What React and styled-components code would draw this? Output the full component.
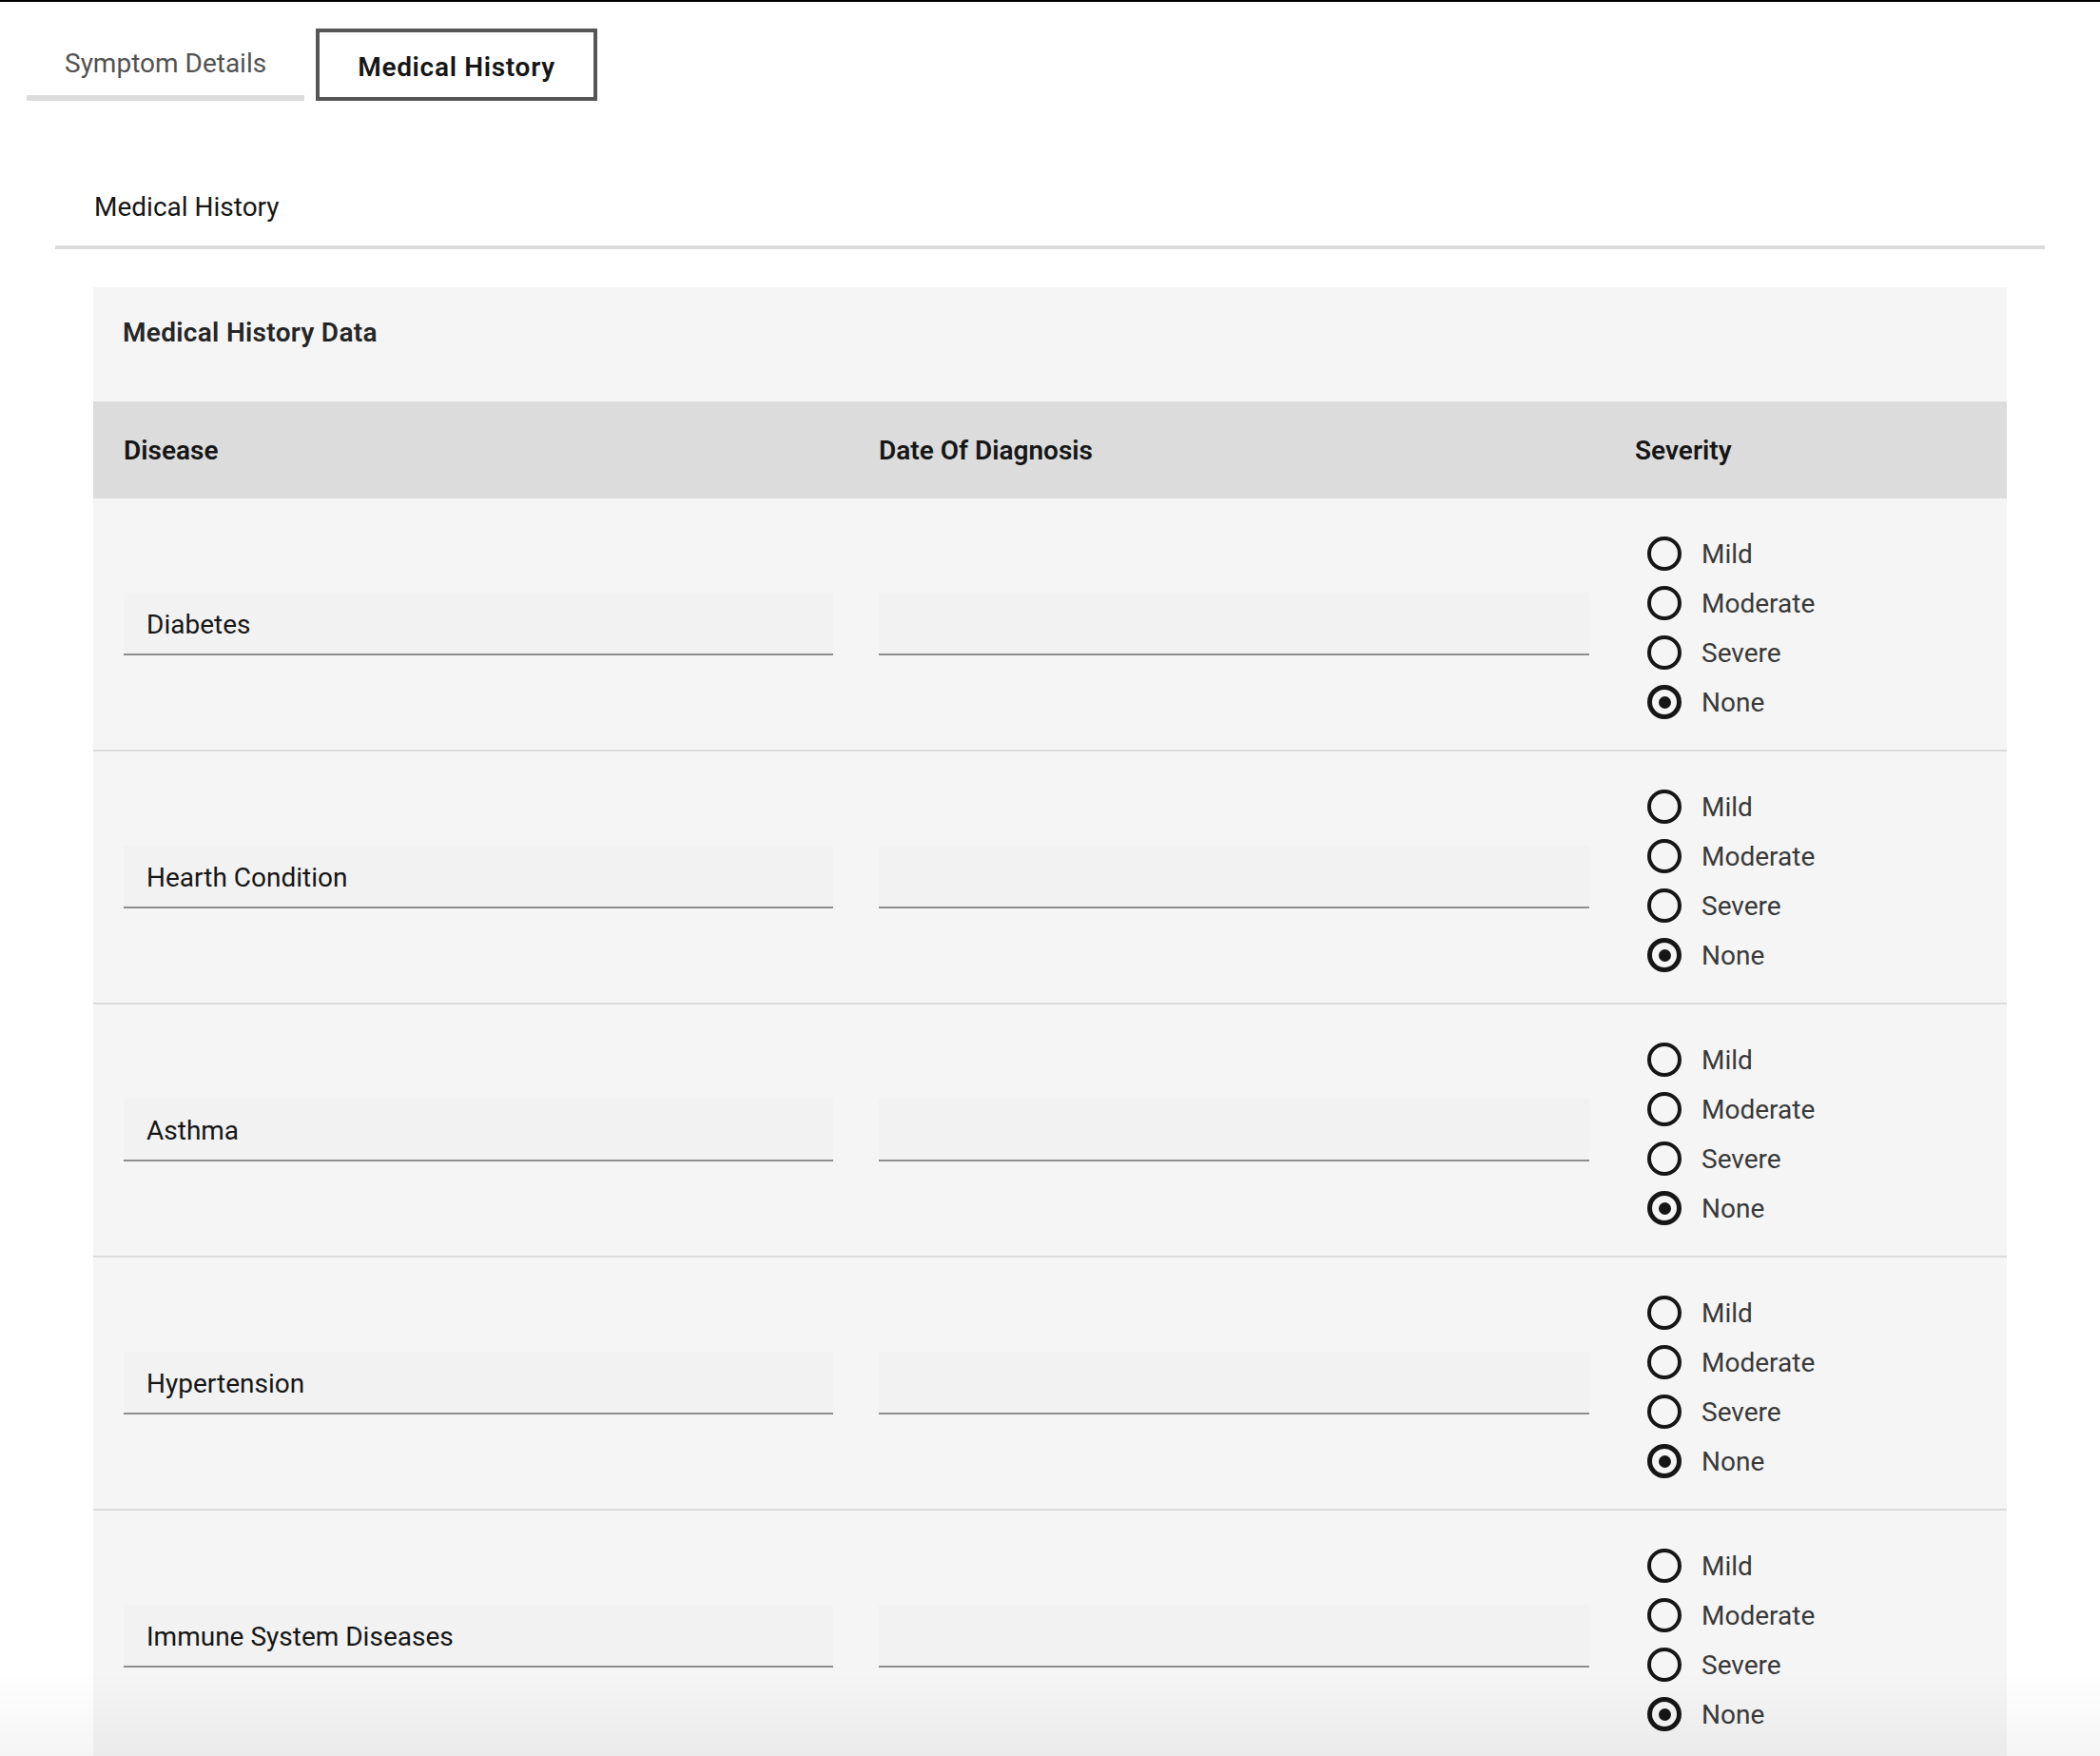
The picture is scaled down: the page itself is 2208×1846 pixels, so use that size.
import styled, { createGlobalStyle } from "styled-components";

const GlobalStyle = createGlobalStyle`
  body {
    margin: 0;
    background: #ffffff;
    font-family: Roboto, "Liberation Sans", sans-serif;
    color: #161616;
  }
`;

const TopEdge = styled.div`
  height: 2px;
  background: #000000;
`;

const TabList = styled.div`
  display: flex;
  gap: 12px;
  padding: 28px 0 0 28px;
`;

const Tab = styled.div`
  box-sizing: border-box;
  height: 76px;
  padding: ${(p) => (p.$selected ? "6px 40px 0" : "4px 40px 0")};
  display: flex;
  align-items: center;
  font-size: 28px;
  line-height: 36px;
  white-space: nowrap;
  color: ${(p) => (p.$selected ? "#161616" : "#525252")};
  font-weight: ${(p) => (p.$selected ? 600 : 400)};
  letter-spacing: ${(p) => (p.$selected ? "0.7px" : "0")};
  border: ${(p) => (p.$selected ? "4px solid #565656" : "none")};
  border-bottom: ${(p) => (p.$selected ? "4px solid #565656" : "6px solid #dcdcdc")};
`;

const SectionHeader = styled.div`
  margin: 94px 58px 0;
  padding: 0 0 22px 41px;
  font-size: 28px;
  line-height: 36px;
  color: #161616;
  border-bottom: 4px solid #dcdcdc;
`;

const TableWrap = styled.div`
  margin: 40px 98px 0;
  background: #f5f5f5;
`;

const TableTitle = styled.div`
  padding: 30px 31px 54px;
  font-size: 28px;
  line-height: 36px;
  font-weight: 600;
  letter-spacing: 0.3px;
  color: #262626;
`;

const Grid = styled.div`
  display: grid;
  grid-template-columns: 794px 795px 1fr;
  align-items: center;
`;

const HeadRow = styled(Grid)`
  height: 102px;
  background: #dcdcdc;
`;

const HeadCell = styled.div`
  padding: 2px 0 0 32px;
  font-size: 28px;
  line-height: 36px;
  font-weight: 600;
  color: #161616;
`;

const Row = styled(Grid)`
  height: 266px;
  box-sizing: border-box;
  border-bottom: 2px solid #dcdcdc;
`;

const Cell = styled.div`
  padding: 0 16px 0 32px;
`;

const Field = styled.div`
  box-sizing: border-box;
  height: 66px;
  padding: 2px 24px 0;
  display: flex;
  align-items: center;
  background: #f2f2f2;
  border-bottom: 2px solid #8d8d8d;
  font-size: 28px;
  color: #161616;
`;

const RadioGroup = styled.div`
  display: flex;
  flex-direction: column;
  margin-left: 13px;
  padding-top: 8px;
`;

const RadioItem = styled.label`
  display: flex;
  align-items: center;
  gap: 21px;
  height: 52px;
  font-size: 28px;
  color: #393939;
`;

const Circle = styled.span`
  box-sizing: border-box;
  width: 36px;
  height: 36px;
  border-radius: 50%;
  border: ${(p) => (p.$checked ? "5px" : "4px")} solid #161616;
  display: flex;
  align-items: center;
  justify-content: center;

  &::after {
    content: "";
    display: ${(p) => (p.$checked ? "block" : "none")};
    width: 13px;
    height: 13px;
    border-radius: 50%;
    background: #161616;
  }
`;

const BottomFade = styled.div`
  position: fixed;
  left: 0;
  right: 0;
  bottom: 0;
  height: 90px;
  pointer-events: none;
  background: linear-gradient(to bottom, rgba(0, 0, 0, 0), rgba(0, 0, 0, 0.04));
`;

const diseases = [
  "Diabetes",
  "Hearth Condition",
  "Asthma",
  "Hypertension",
  "Immune System Diseases",
];

const levels = ["Mild", "Moderate", "Severe", "None"];

const App = () => {
  return (
    <>
      <GlobalStyle />
      <TopEdge />
      <TabList>
        <Tab>Symptom Details</Tab>
        <Tab $selected>Medical History</Tab>
      </TabList>
      <SectionHeader>Medical History</SectionHeader>
      <TableWrap>
        <TableTitle>Medical History Data</TableTitle>
        <HeadRow>
          <HeadCell>Disease</HeadCell>
          <HeadCell>Date Of Diagnosis</HeadCell>
          <HeadCell>Severity</HeadCell>
        </HeadRow>
        {diseases.map((d) => (
          <Row key={d}>
            <Cell>
              <Field>{d}</Field>
            </Cell>
            <Cell>
              <Field />
            </Cell>
            <Cell>
              <RadioGroup>
                {levels.map((l) => (
                  <RadioItem key={l}>
                    <Circle $checked={l === "None"} />
                    {l}
                  </RadioItem>
                ))}
              </RadioGroup>
            </Cell>
          </Row>
        ))}
      </TableWrap>
      <BottomFade />
    </>
  );
};

export default App;
